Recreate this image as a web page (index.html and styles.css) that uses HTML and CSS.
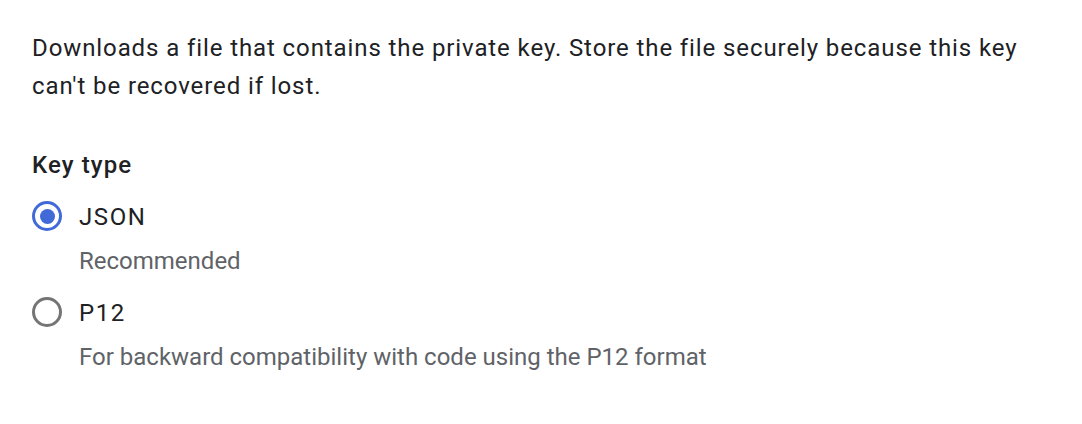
FILE: index.html
```html
<!DOCTYPE html>
<html lang="en">
<head>
    <meta charset="UTF-8">
    <title>Create private key</title>
    <link rel="stylesheet" href="styles.css">
</head>
<body>
<div class="container">
    <p class="intro">Downloads a file that contains the private key. Store the file securely because this key can't be recovered if lost.</p>
    <div class="key-type">
        <div class="group-label">Key type</div>
        <label class="option">
            <span class="radio checked"></span>
            <span class="option-text">
                <span class="option-name">JSON</span>
                <span class="option-hint">Recommended</span>
            </span>
        </label>
        <label class="option">
            <span class="radio"></span>
            <span class="option-text">
                <span class="option-name">P12</span>
                <span class="option-hint">For backward compatibility with code using the P12 format</span>
            </span>
        </label>
    </div>
</div>
</body>
</html>
```

FILE: styles.css
```css
body {
    font-family: Roboto, Arial, sans-serif;
    background-color: #ffffff;
    color: #202124;
    margin: 0;
    padding: 0;
}

.container {
    padding: 29px 32px;
    width: 1000px;
}

.intro {
    font-size: 24px;
    line-height: 38px;
    letter-spacing: 0.9px;
    margin: 0 0 45px 0;
}

.group-label {
    font-size: 24px;
    font-weight: 500;
    line-height: 30px;
    letter-spacing: 1.1px;
    margin-bottom: 22px;
}

.option {
    display: flex;
    align-items: flex-start;
    margin-bottom: 22px;
}

.radio {
    width: 24px;
    height: 24px;
    border: 3px solid #757575;
    border-radius: 50%;
    margin-top: -1px;
    margin-right: 17px;
    position: relative;
    flex-shrink: 0;
}

.radio.checked {
    border-color: #4169d8;
}

.radio.checked::after {
    content: "";
    position: absolute;
    left: 4.5px;
    top: 4.5px;
    width: 15px;
    height: 15px;
    border-radius: 50%;
    background-color: #4169d8;
}

.option-text {
    display: flex;
    flex-direction: column;
}

.option-name {
    font-size: 24px;
    line-height: 30px;
    letter-spacing: 1.6px;
    color: #202124;
}

.option-hint {
    font-size: 24px;
    line-height: 30px;
    color: #5f6368;
    margin-top: 14px;
}
```
